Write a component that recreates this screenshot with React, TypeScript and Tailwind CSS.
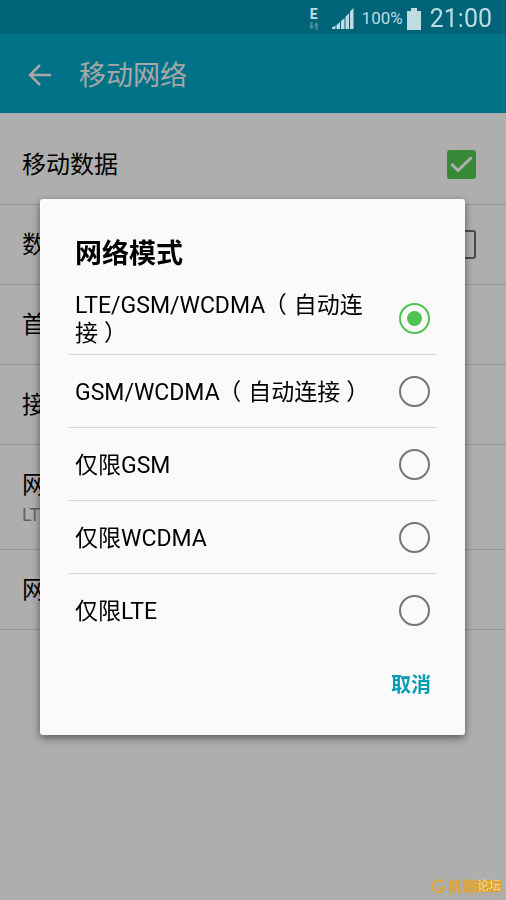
import { useState } from "react";

type Setting = { title: string; note?: string; check?: boolean };

const settings: Setting[] = [
  { title: "移动数据", check: true },
  { title: "数据漫游", check: false },
  { title: "首选网络" },
  { title: "接入点名称" },
  { title: "网络模式", note: "LTE/GSM/WCDMA" },
  { title: "网络运营商" },
];

const modes = [
  { name: "LTE/GSM/WCDMA", detail: "自动连接" },
  { name: "GSM/WCDMA", detail: "自动连接" },
  { name: "仅限GSM" },
  { name: "仅限WCDMA" },
  { name: "仅限LTE" },
];

function StatusBar() {
  return (
    <div className="relative z-20 flex h-[34px] items-center justify-end bg-[#006478] pt-[3px] pr-[14px] text-[#bfdce3]">
      <div className="mr-[11px] flex w-3 flex-col items-center">
        <span className="text-[14px] leading-[14px] font-bold">E</span>
        <svg viewBox="0 0 12 10" className="h-[10px] w-3 fill-[#4f8f9c]">
          <path d="M2.500 1h2v4H6L3.500 8.500 1 5h1.500zM7.500 8.500h2V4.500H11L8.500 1 6 4.500h1.500z" />
        </svg>
      </div>
      <svg viewBox="0 0 24 24" className="mr-[7px] h-6 w-6 fill-current">
        <path d="M1 20.500l3.500-2V22H1zM5.500 18l3.500-3v7H5.500zM10 14l3.500-3v11H10zM14.500 9.500L18 6.500V22h-3.500zM19 4.500L22.500 1v21H19z" />
      </svg>
      <span className="text-[17px]">100%</span>
      <svg viewBox="0 0 14 22" className="mr-[9px] ml-1 h-[22px] w-[14px] fill-current">
        <path d="M4 0h6v3h4v19H0V3h4z" />
      </svg>
      <span className="text-[25px]">21:00</span>
    </div>
  );
}

function SettingRow({ item }: { item: Setting }) {
  const [on, setOn] = useState(item.check ?? false);
  return (
    <label
      className={`flex items-center justify-between border-b border-[#d8d8d8] pr-[30px] pl-[22px] ${
        item.note ? "h-[105px] pt-1" : "h-20"
      }`}
    >
      <span>
        <span className="block text-2xl leading-8 text-black">{item.title}</span>
        {item.note && <span className="block text-[18px] leading-7 text-[#8a8a8a]">{item.note}</span>}
      </span>
      {item.check !== undefined && (
        <span className="relative h-[29px] w-[29px]">
          <input
            type="checkbox"
            checked={on}
            onChange={() => setOn(!on)}
            className="block h-[29px] w-[29px] appearance-none rounded-[3px] border-2 border-[#6a6a6a] checked:border-0 checked:bg-[#50c450]"
          />
          {on && (
            <svg
              viewBox="0 0 29 29"
              className="pointer-events-none absolute inset-0 fill-none stroke-[#fafafa] stroke-3"
            >
              <path d="M4.500 14l6.500 6.500L24.500 7.500" />
            </svg>
          )}
        </span>
      )}
    </label>
  );
}

function ModeDialog() {
  const [selected, setSelected] = useState(0);
  return (
    <div className="fixed inset-0 z-10 flex items-center bg-black/30 pt-[34px] pr-[41px] pl-10">
      <div
        role="dialog"
        aria-labelledby="mode-title"
        className="w-full rounded-[3px] bg-[#fafafa] px-7 shadow-[0_3px_8px_rgba(0,0,0,0.5)]"
      >
        <h2 id="mode-title" className="px-[7px] pt-[35px] pb-2 text-[27px] leading-10 font-bold text-black">
          网络模式
        </h2>
        <div className="divide-y divide-[#d6d6d6]">
          {modes.map((mode, i) => (
            <label
              key={mode.name}
              className="flex h-[73px] items-center justify-between gap-6 px-[7px] text-[23px] leading-7 text-black"
            >
              <span className="pt-[3px]">
                {mode.name}
                {mode.detail && (
                  <>
                    <span className="pr-[7px] pl-[10px] [font-feature-settings:'halt']">（</span>
                    {mode.detail}
                    <span className="pl-[6px] [font-feature-settings:'halt']">）</span>
                  </>
                )}
              </span>
              <input
                type="radio"
                name="mode"
                checked={selected === i}
                onChange={() => setSelected(i)}
                className="grid h-[31px] w-[31px] shrink-0 appearance-none place-items-center rounded-full border-2 border-[#757575] before:h-[15px] before:w-[15px] before:rounded-full checked:border-[#50c450] checked:before:bg-[#50c450]"
              />
            </label>
          ))}
        </div>
        <div className="flex justify-end pt-[18px] pr-[6px] pb-[30px]">
          <button type="button" className="h-10 text-[20px] font-bold text-[#0a9bb5]">
            取消
          </button>
        </div>
      </div>
    </div>
  );
}

function Watermark() {
  return (
    <div className="fixed right-1 bottom-[5px] z-20 flex items-center gap-[2px] text-[#dfa52e]">
      <svg viewBox="0 0 16 16" className="h-4 w-4 fill-none stroke-current stroke-2">
        <path d="M13 3.500A6 6 0 1 0 14 9H8" />
      </svg>
      <div className="border-b border-dashed border-[#c0a878]">
        <div className="flex items-center">
          <span className="text-[14px] leading-4 font-black">机锋</span>
          <span className="bg-[#dfa52e] px-px text-[12px] leading-3 text-[#ecdcb8]">论坛</span>
        </div>
      </div>
    </div>
  );
}

export default function App() {
  return (
    <div className="min-h-screen bg-[#fafafa] font-[Roboto,'Noto_Sans_CJK_SC',sans-serif]">
      <StatusBar />
      <header className="flex h-[79px] items-center gap-[27px] bg-[#00a4c2] pt-[3px] pl-[27px] text-[#f0f0f0]">
        <button type="button" aria-label="返回">
          <svg viewBox="0 0 25 24" className="h-6 w-[25px] fill-none stroke-current stroke-[2.5]">
            <path d="M24 12H3M13 2L3 12l10 10" />
          </svg>
        </button>
        <h1 className="pt-[2px] text-[27px]">移动网络</h1>
      </header>
      <main className="pt-3">
        {settings.map((item) => (
          <SettingRow key={item.title} item={item} />
        ))}
      </main>
      <ModeDialog />
      <Watermark />
    </div>
  );
}
